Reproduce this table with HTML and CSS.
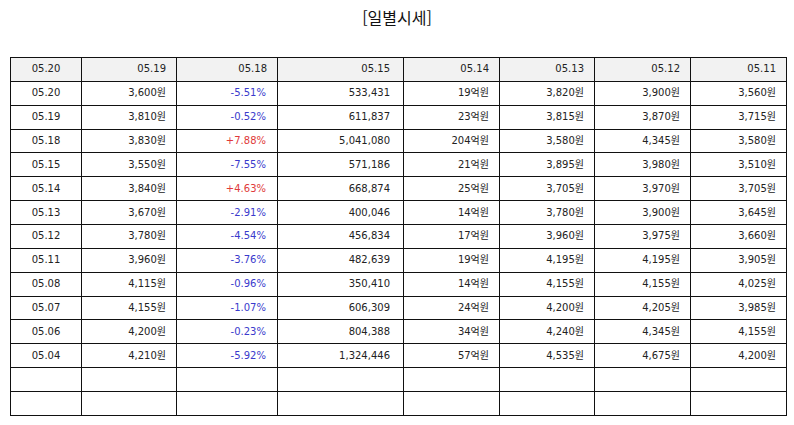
FILE: index.html
```html
<!DOCTYPE html>
<html lang="ko">
<head>
<meta charset="utf-8">
<title>일별시세</title>
<link rel="stylesheet" href="styles.css">
</head>
<body>
<h2 class="title">[일별시세]</h2>
<table class="daily">
<colgroup>
<col class="c1"><col class="c2"><col class="c3"><col class="c4"><col class="c5"><col class="c6"><col class="c7"><col class="c8">
</colgroup>
<thead>
<tr><th class="center">05.20</th><th>05.19</th><th>05.18</th><th class="wide">05.15</th><th>05.14</th><th>05.13</th><th>05.12</th><th>05.11</th></tr>
</thead>
<tbody>
<tr><td class="center">05.20</td><td>3,600원</td><td class="down">-5.51%</td><td class="wide">533,431</td><td>19억원</td><td>3,820원</td><td>3,900원</td><td>3,560원</td></tr>
<tr><td class="center">05.19</td><td>3,810원</td><td class="down">-0.52%</td><td class="wide">611,837</td><td>23억원</td><td>3,815원</td><td>3,870원</td><td>3,715원</td></tr>
<tr><td class="center">05.18</td><td>3,830원</td><td class="up">+7.88%</td><td class="wide">5,041,080</td><td>204억원</td><td>3,580원</td><td>4,345원</td><td>3,580원</td></tr>
<tr><td class="center">05.15</td><td>3,550원</td><td class="down">-7.55%</td><td class="wide">571,186</td><td>21억원</td><td>3,895원</td><td>3,980원</td><td>3,510원</td></tr>
<tr><td class="center">05.14</td><td>3,840원</td><td class="up">+4.63%</td><td class="wide">668,874</td><td>25억원</td><td>3,705원</td><td>3,970원</td><td>3,705원</td></tr>
<tr><td class="center">05.13</td><td>3,670원</td><td class="down">-2.91%</td><td class="wide">400,046</td><td>14억원</td><td>3,780원</td><td>3,900원</td><td>3,645원</td></tr>
<tr><td class="center">05.12</td><td>3,780원</td><td class="down">-4.54%</td><td class="wide">456,834</td><td>17억원</td><td>3,960원</td><td>3,975원</td><td>3,660원</td></tr>
<tr><td class="center">05.11</td><td>3,960원</td><td class="down">-3.76%</td><td class="wide">482,639</td><td>19억원</td><td>4,195원</td><td>4,195원</td><td>3,905원</td></tr>
<tr><td class="center">05.08</td><td>4,115원</td><td class="down">-0.96%</td><td class="wide">350,410</td><td>14억원</td><td>4,155원</td><td>4,155원</td><td>4,025원</td></tr>
<tr><td class="center">05.07</td><td>4,155원</td><td class="down">-1.07%</td><td class="wide">606,309</td><td>24억원</td><td>4,200원</td><td>4,205원</td><td>3,985원</td></tr>
<tr><td class="center">05.06</td><td>4,200원</td><td class="down">-0.23%</td><td class="wide">804,388</td><td>34억원</td><td>4,240원</td><td>4,345원</td><td>4,155원</td></tr>
<tr><td class="center">05.04</td><td>4,210원</td><td class="down">-5.92%</td><td class="wide">1,324,446</td><td>57억원</td><td>4,535원</td><td>4,675원</td><td>4,200원</td></tr>
<tr><td></td><td></td><td></td><td></td><td></td><td></td><td></td><td></td></tr>
<tr><td></td><td></td><td></td><td></td><td></td><td></td><td></td><td></td></tr>
</tbody>
</table>
</body>
</html>
```

FILE: styles.css
```css
html, body {
  margin: 0;
  padding: 0;
  background: #ffffff;
}

body {
  font-family: "DejaVu Sans", "Noto Sans CJK KR", sans-serif;
  color: #222222;
}

.title {
  margin: 0;
  height: 57px;
  padding-top: 5px;
  box-sizing: border-box;
  text-align: center;
  font-family: "Noto Sans CJK KR", sans-serif;
  font-weight: normal;
  font-size: 16px;
  line-height: 24px;
  color: #111111;
}

.daily {
  margin-left: 10px;
  border-collapse: collapse;
  table-layout: fixed;
  width: 776px;
  font-size: 10px;
}

.c1 { width: 71px; }
.c2 { width: 95px; }
.c3 { width: 101px; }
.c4 { width: 126px; }
.c5 { width: 96px; }
.c6 { width: 95px; }
.c7 { width: 96px; }
.c8 { width: 96px; }

.daily th,
.daily td {
  border: 1px solid #111111;
  height: 22.87px;
  padding: 0 10px 0 0;
  text-align: right;
  font-weight: normal;
  line-height: 14px;
  white-space: nowrap;
  color: #222222;
}

.daily th {
  background: #f2f2f2;
}

.daily .center {
  text-align: center;
  padding: 0;
}

.daily .wide {
  padding-right: 13px;
}

.daily .down {
  color: #3a3acc;
  padding-right: 11px;
}

.daily .up {
  color: #e03a3a;
  padding-right: 11px;
}
```
